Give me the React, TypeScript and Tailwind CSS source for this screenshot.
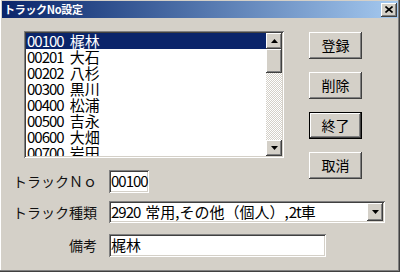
const raised =
  'shadow-[inset_-1px_-1px_#404040,inset_1px_1px_#ffffff,inset_-2px_-2px_#808080,inset_2px_2px_#d4d0c8]';
const sunken =
  'shadow-[inset_1px_1px_#808080,inset_-1px_-1px_#ffffff,inset_2px_2px_#404040,inset_-2px_-2px_#d4d0c8]';

const items = [
  ['00100', '梶林'],
  ['00201', '大石'],
  ['00202', '八杉'],
  ['00300', '黒川'],
  ['00400', '松浦'],
  ['00500', '吉永'],
  ['00600', '大畑'],
  ['00700', '岩田'],
];

function Arrow({ down }: { down?: boolean }) {
  return (
    <svg width="7" height="4" viewBox="0 0 7 4">
      {down ? <polygon points="0,0 7,0 3.5,4" fill="#000" /> : <polygon points="0,4 7,4 3.5,0" fill="#000" />}
    </svg>
  );
}

function Button({ label, isDefault }: { label: string; isDefault?: boolean }) {
  return (
    <div className={`w-[53px] h-[27px] ${isDefault ? 'border border-black' : ''}`}>
      <div className={`w-full h-full flex items-center justify-center text-[14px] text-black bg-[#d4d0c8] ${raised}`}>
        {label}
      </div>
    </div>
  );
}

function Label({ text }: { text: string }) {
  return <div className="w-[95px] flex justify-end text-[14px] text-[#111]">{text}</div>;
}

export default function App() {
  return (
    <div
      className={`w-[400px] h-[272px] bg-[#d4d0c8] flex flex-col pt-[1px] px-[2px] overflow-hidden shadow-[inset_-1px_-1px_#404040,inset_-2px_-2px_#808080,inset_1px_0_#ffffff] [font-family:'Noto_Sans_CJK_JP',sans-serif]`}
    >
      {/* title bar */}
      <div className="h-[17px] flex items-center justify-between pl-[2px] pr-[1px] bg-gradient-to-r from-[#0a246a] to-[#a6caf0]">
        <span className="text-white font-bold text-[11px] tracking-[-0.3px] leading-none">トラックNo設定</span>
        <div className={`w-[16px] h-[14px] bg-[#d4d0c8] flex items-center justify-center ${raised}`}>
          <svg width="8" height="7" viewBox="0 0 8 7">
            <path d="M0.5 0.5 L7.5 6.5 M7.5 0.5 L0.5 6.5" stroke="#000" strokeWidth="1.6" />
          </svg>
        </div>
      </div>

      <div className="flex mt-[13px]">
        <div className="flex flex-col">
          {/* list box */}
          <div className={`ml-[22px] w-[260px] h-[127px] bg-white p-[2px] flex ${sunken}`}>
            <div className="flex-1 overflow-hidden">
              {items.map(([no, name], i) => (
                <div
                  key={no}
                  className={`h-[16px] leading-[16px] pl-[1px] text-[15px] whitespace-nowrap ${
                    i === 0 ? 'bg-[#0a246a] text-white' : 'text-black'
                  }`}
                >
                  <span className="tracking-[-1px]">{no}</span>
                  <span className="ml-[6px]">{name}</span>
                </div>
              ))}
            </div>
            <div className="w-[16px] flex flex-col">
              <div className={`h-[16px] bg-[#d4d0c8] flex items-center justify-center ${raised}`}>
                <Arrow />
              </div>
              <div className={`h-[24px] bg-[#d4d0c8] ${raised}`} />
              <div className="flex-1 bg-[image:repeating-conic-gradient(#ffffff_0_25%,#d4d0c8_0_50%)] bg-[length:2px_2px]" />
              <div className={`h-[16px] bg-[#d4d0c8] flex items-center justify-center ${raised}`}>
                <Arrow down />
              </div>
            </div>
          </div>

          {/* track no */}
          <div className="flex items-center mt-[12px] h-[23px]">
            <Label text="トラックＮｏ" />
            <div className={`ml-[12px] w-[40px] h-[23px] bg-white flex items-center pl-[2px] text-[15px] ${sunken}`}>
              <span className="tracking-[-1px]">00100</span>
            </div>
          </div>
        </div>

        <div className="ml-[25px] mt-[1px] flex flex-col gap-[13px]">
          <Button label="登録" />
          <Button label="削除" />
          <Button label="終了" isDefault />
          <Button label="取消" />
        </div>
      </div>

      {/* track type */}
      <div className="flex items-center mt-[8px] h-[22px]">
        <Label text="トラック種類" />
        <div className={`ml-[12px] w-[276px] h-[22px] bg-white flex items-center p-[2px] ${sunken}`}>
          <div className="flex-1 text-[15px] whitespace-nowrap">
            <span className="tracking-[-1px]">2920</span>
            <span className="ml-[5px]">常用,その他（個人）,</span>
            <span className="tracking-[-1px]">2t</span>車
          </div>
          <div className={`w-[16px] h-full bg-[#d4d0c8] flex items-center justify-center ${raised}`}>
            <Arrow down />
          </div>
        </div>
      </div>

      {/* remarks */}
      <div className="flex items-center mt-[11px] h-[23px]">
        <Label text="備考" />
        <div className={`ml-[12px] w-[217px] h-[23px] bg-white flex items-center pl-[2px] text-[15px] ${sunken}`}>
          梶林
        </div>
      </div>
    </div>
  );
}
